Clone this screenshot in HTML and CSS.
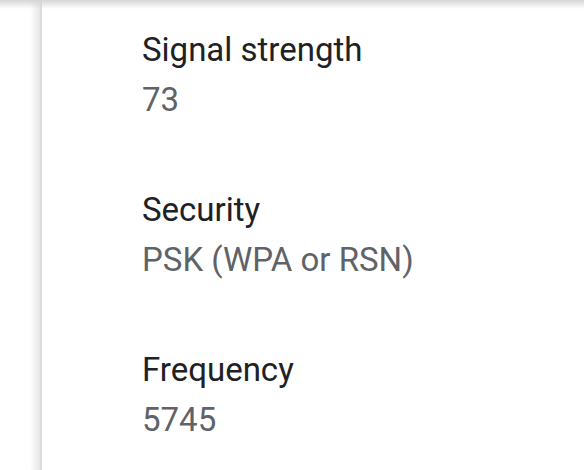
FILE: index.html
```html
<!DOCTYPE html>
<html>
<head>
<meta charset="utf-8">
<link rel="stylesheet" href="styles.css">
</head>
<body>
<div class="screen">
  <div class="side"></div>
  <div class="panel">
    <div class="item">
      <div class="title">Signal strength</div>
      <div class="value">73</div>
    </div>
    <div class="item">
      <div class="title">Security</div>
      <div class="value">PSK (WPA or RSN)</div>
    </div>
    <div class="item">
      <div class="title">Frequency</div>
      <div class="value">5745</div>
    </div>
  </div>
  <div class="topshadow"></div>
</div>
</body>
</html>
```
FILE: styles.css
```css
html, body { margin: 0; padding: 0; background: #fff; }
.screen {
  position: relative;
  width: 584px;
  height: 470px;
  overflow: hidden;
  display: flex;
  font-family: Roboto, "Liberation Sans", sans-serif;
}
.side {
  width: 41px;
  flex: none;
  background: linear-gradient(to right, #fff 0, #fff 30px, #e6e6e6 40px, #d4d4d4 41px);
}
.panel {
  flex: 1;
  background: #fff;
  padding: 25px 0 0 100px;
  border-left: 1px solid #dadada;
}
.item {
  height: 160px;
}
.title {
  font-size: 33px;
  line-height: 50px;
  color: #202124;
}
.value {
  font-size: 33px;
  line-height: 50px;
  color: #5f6368;
}
.topshadow {
  position: absolute;
  left: 0; top: 0; right: 0;
  height: 9px;
  background: linear-gradient(to bottom, #d6d6d6, rgba(255,255,255,0));
}
```
